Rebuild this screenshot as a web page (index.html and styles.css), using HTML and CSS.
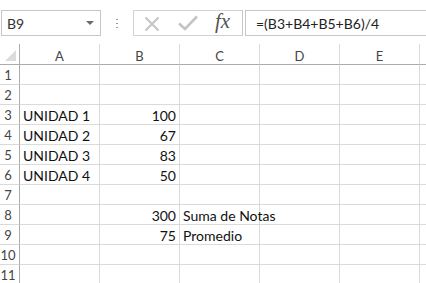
FILE: index.html
```html
<!DOCTYPE html>
<html lang="es">

<head>
  <meta charset="UTF-8">
  <title>Promedio de Notas</title>
  <link rel="stylesheet" href="styles.css">
</head>

<body>
  <div class="formula-bar">
    <div class="name-box">
      <span>B9</span>
      <span class="name-arrow"></span>
    </div>
    <div class="grip"><i></i><i></i><i></i></div>
    <div class="fx-buttons">
      <svg class="icon-cancel" width="16" height="16" viewBox="0 0 16 16">
        <path d="M1.5 1.5 L14.5 14.5 M14.5 1.5 L1.5 14.5" stroke="#c4c4c4" stroke-width="2" fill="none" />
      </svg>
      <svg class="icon-enter" width="20" height="16" viewBox="0 0 20 16">
        <path d="M1 8.5 L7 14 L19 1.5" stroke="#c4c4c4" stroke-width="2.6" fill="none" />
      </svg>
      <span class="fx">fx</span>
    </div>
    <div class="formula-input">=(B3+B4+B5+B6)/4</div>
  </div>

  <div class="sheet">
    <div class="corner"><span></span></div>
    <div class="col-head">A</div>
    <div class="col-head">B</div>
    <div class="col-head">C</div>
    <div class="col-head">D</div>
    <div class="col-head">E</div>
    <div class="col-head last"></div>

    <div class="row-head">1</div><div class="cell"></div><div class="cell"></div><div class="cell"></div><div class="cell"></div><div class="cell"></div><div class="cell last"></div>
    <div class="row-head">2</div><div class="cell"></div><div class="cell"></div><div class="cell"></div><div class="cell"></div><div class="cell"></div><div class="cell last"></div>
    <div class="row-head">3</div><div class="cell">UNIDAD 1</div><div class="cell num">100</div><div class="cell"></div><div class="cell"></div><div class="cell"></div><div class="cell last"></div>
    <div class="row-head">4</div><div class="cell">UNIDAD 2</div><div class="cell num">67</div><div class="cell"></div><div class="cell"></div><div class="cell"></div><div class="cell last"></div>
    <div class="row-head">5</div><div class="cell">UNIDAD 3</div><div class="cell num">83</div><div class="cell"></div><div class="cell"></div><div class="cell"></div><div class="cell last"></div>
    <div class="row-head">6</div><div class="cell">UNIDAD 4</div><div class="cell num">50</div><div class="cell"></div><div class="cell"></div><div class="cell"></div><div class="cell last"></div>
    <div class="row-head">7</div><div class="cell"></div><div class="cell"></div><div class="cell"></div><div class="cell"></div><div class="cell"></div><div class="cell last"></div>
    <div class="row-head">8</div><div class="cell"></div><div class="cell num">300</div><div class="cell overflow">Suma de Notas</div><div class="cell"></div><div class="cell"></div><div class="cell last"></div>
    <div class="row-head">9</div><div class="cell"></div><div class="cell num">75</div><div class="cell overflow">Promedio</div><div class="cell"></div><div class="cell"></div><div class="cell last"></div>
    <div class="row-head">10</div><div class="cell"></div><div class="cell"></div><div class="cell"></div><div class="cell"></div><div class="cell"></div><div class="cell last"></div>
    <div class="row-head">11</div><div class="cell"></div><div class="cell"></div><div class="cell"></div><div class="cell"></div><div class="cell"></div><div class="cell last"></div>
  </div>
</body>

</html>
```

FILE: styles.css
```css
body {
  margin: 0;
  background-color: #ffffff;
  font-family: 'Lato', 'Liberation Sans', sans-serif;
  color: #222222;
  overflow: hidden;
}

/* top bar with name box and formula */
.formula-bar {
  display: flex;
  align-items: stretch;
  height: 26px;
  padding-top: 10px;
  padding-bottom: 8px;
  padding-left: 1px;
}

.name-box {
  width: 98px;
  border: 1px solid #c6c6c6;
  display: flex;
  align-items: center;
  justify-content: space-between;
  padding: 0 6px 0 5px;
  box-sizing: border-box;
  width: 100px;
  font-size: 14px;
  color: #333333;
}

.name-arrow {
  width: 0;
  height: 0;
  border-left: 4px solid transparent;
  border-right: 4px solid transparent;
  border-top: 4px solid #6a6a6a;
}

.grip {
  width: 32px;
  display: flex;
  flex-direction: column;
  align-items: center;
  justify-content: center;
  gap: 3px;
}

.grip i {
  width: 2px;
  height: 1px;
  background-color: #9a9a9a;
}

.fx-buttons {
  width: 110px;
  box-sizing: border-box;
  border: 1px solid #d2d2d2;
  border-right: 1px solid #c6c6c6;
  display: flex;
  align-items: center;
  padding-left: 10px;
}

.icon-cancel {
  margin-top: 1px;
}

.icon-enter {
  margin-left: 18px;
}

.fx {
  margin-left: 17px;
  font-family: 'Liberation Serif', serif;
  font-style: italic;
  font-size: 21px;
  color: #555555;
  line-height: 1;
  margin-top: -3px;
}

.formula-input {
  flex: 1;
  margin-left: 2px;
  border: 1px solid #c6c6c6;
  border-right: none;
  font-size: 14px;
  color: #222222;
  padding-left: 10px;
  display: flex;
  align-items: center;
}

/* the sheet grid */
.sheet {
  display: grid;
  grid-template-columns: 20px repeat(5, 80px) 1fr;
  grid-template-rows: 21px repeat(11, 20px);
}

.corner {
  border-right: 1px solid #ababab;
  border-bottom: 1px solid #ababab;
  position: relative;
}

.corner span {
  position: absolute;
  right: 3px;
  bottom: 3px;
  width: 0;
  height: 0;
  border-left: 11px solid transparent;
  border-bottom: 11px solid #dcdcdc;
}

.col-head {
  border-bottom: 1px solid #ababab;
  border-right: 1px solid #dadada;
  font-size: 13px;
  color: #444444;
  text-align: center;
  line-height: 20px;
  padding-top: 2px;
  box-sizing: border-box;
}

.col-head.last,
.cell.last {
  border-right: none;
}

.row-head {
  border-right: 1px solid #ababab;
  border-bottom: 1px solid #dadada;
  font-size: 13px;
  color: #444444;
  text-align: center;
  line-height: 20px;
  padding-right: 3px;
}

.cell {
  border-right: 1px solid #dadada;
  border-bottom: 1px solid #dadada;
  font-size: 14px;
  line-height: 21px;
  padding: 0 3px;
  white-space: nowrap;
  color: #111111;
}

.cell.num {
  text-align: right;
}

.cell.overflow {
  overflow: visible;
  position: relative;
  z-index: 1;
  background-color: transparent;
}
```
